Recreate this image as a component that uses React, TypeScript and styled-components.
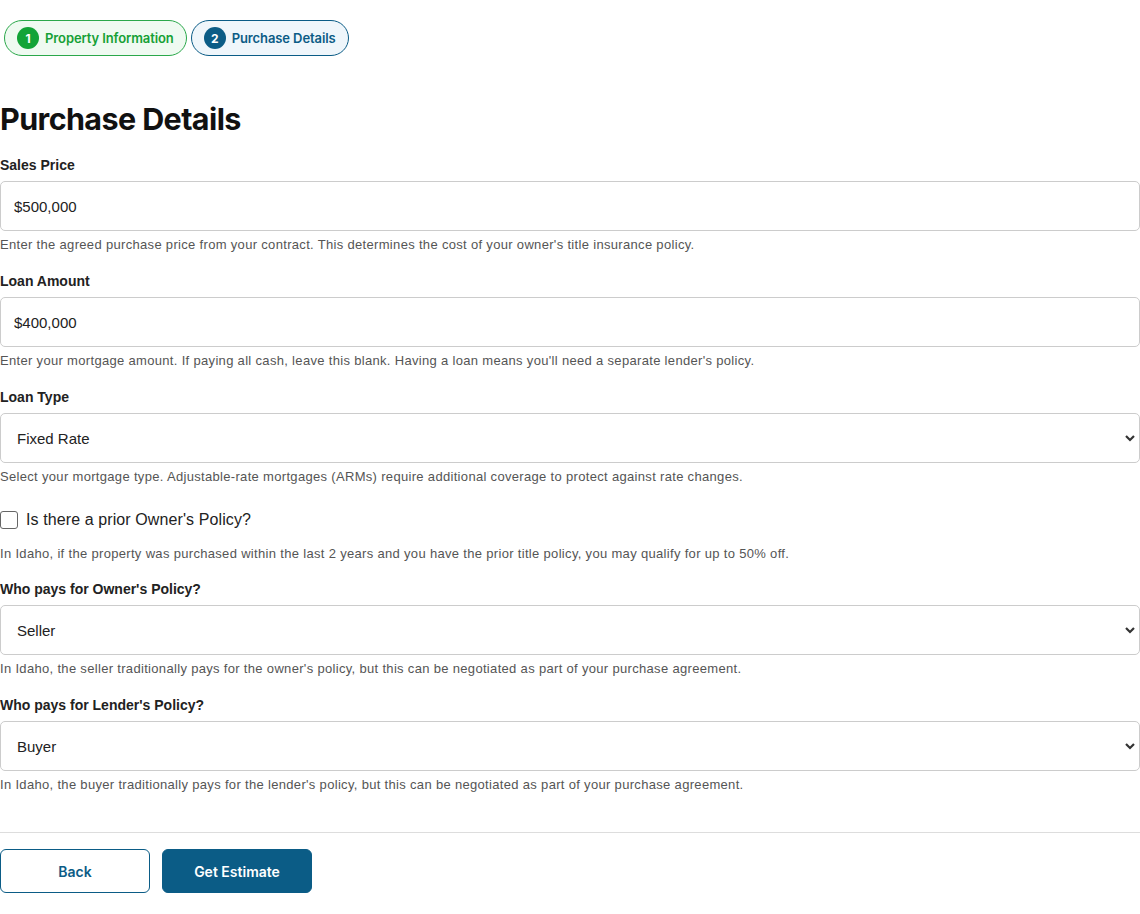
import React from "react";
import styled, { createGlobalStyle } from "styled-components";

const Global = createGlobalStyle`
  html, body { margin: 0; padding: 0; background: #fff; }
  body { font-family: "Liberation Sans", Arial, sans-serif; color: #222; }
  * { box-sizing: border-box; }
`;

const Page = styled.div`
  padding: 20px 0 20px 0;
  width: 1140px;
`;

const Stepper = styled.div`
  display: flex;
  gap: 4px;
  padding-left: 4px;
`;

const Step = styled.div<{ $variant: "done" | "active" }>`
  display: flex;
  align-items: center;
  gap: 6px;
  height: 36px;
  padding: 0 12px 0 12px;
  border-radius: 18px;
  border: 1px solid ${(p) => (p.$variant === "done" ? "#2aa84a" : "#0b5c86")};
  background: ${(p) => (p.$variant === "done" ? "#effaf1" : "#eff6fb")};
  color: ${(p) => (p.$variant === "done" ? "#16a035" : "#0b5c86")};
  font-family: Inter, sans-serif;
  font-weight: 600;
  font-size: 13px;
  letter-spacing: -0.1px;
`;

const StepNum = styled.span<{ $variant: "done" | "active" }>`
  width: 22px;
  height: 22px;
  border-radius: 50%;
  display: flex;
  align-items: center;
  justify-content: center;
  background: ${(p) => (p.$variant === "done" ? "#13a337" : "#0b5c86")};
  color: #fff;
  font-size: 12px;
  font-weight: 700;
`;

const Title = styled.h1`
  margin: 44px 0 19px 0;
  font-family: Inter, sans-serif;
  font-weight: 700;
  font-size: 30.5px;
  letter-spacing: -0.6px;
  line-height: 38px;
  color: #111;
`;

const Field = styled.div`
  margin-bottom: 21px;
`;

const Label = styled.label`
  display: block;
  font-size: 14px;
  font-weight: 700;
  color: #222;
  line-height: 17px;
  margin-bottom: 7px;
`;

const Input = styled.input`
  display: block;
  width: 100%;
  height: 50px;
  border: 1px solid #ccc;
  border-radius: 5px;
  padding: 0 13px;
  font-family: "Liberation Sans", Arial, sans-serif;
  font-size: 15px;
  color: #222;
  background: #fff;
  outline: none;
`;

const SelectWrap = styled.div`
  position: relative;
`;

const Select = styled.select`
  display: block;
  width: 100%;
  height: 50px;
  border: 1px solid #ccc;
  border-radius: 5px;
  padding: 0 16px;
  font-family: "Liberation Sans", Arial, sans-serif;
  font-size: 15px;
  color: #222;
  background: #fff;
  appearance: none;
  outline: none;
`;

const Chevron = styled.svg`
  position: absolute;
  right: 4px;
  top: 50%;
  transform: translateY(-50%);
  pointer-events: none;
`;

const Help = styled.div`
  margin-top: 6px;
  font-size: 13px;
  line-height: 15px;
  color: #555;
  letter-spacing: 0.32px;
`;

const CheckRow = styled.label`
  display: flex;
  align-items: center;
  gap: 8px;
  font-size: 16px;
  color: #222;
  margin-top: 27px;
  letter-spacing: 0.1px;
`;

const Box = styled.span`
  width: 18px;
  height: 18px;
  border: 1px solid #666;
  border-radius: 3px;
  background: #fff;
`;

const CheckHelp = styled(Help)`
  margin-top: 17px;
  margin-bottom: 20px;
`;

const Divider = styled.hr`
  border: none;
  border-top: 1px solid #ddd;
  margin: 40px 0 16px 0;
`;

const Actions = styled.div`
  display: flex;
  gap: 12px;
`;

const Btn = styled.button<{ $primary?: boolean }>`
  width: 150px;
  height: 44px;
  border-radius: 6px;
  border: 1px solid #0b5c86;
  background: ${(p) => (p.$primary ? "#0b5c86" : "#fff")};
  color: ${(p) => (p.$primary ? "#fff" : "#0b5c86")};
  font-family: Inter, sans-serif;
  font-weight: 600;
  font-size: 14px;
`;

const SelField = ({ label, value, help }: { label: string; value: string; help: string }) => (
  <Field>
    <Label>{label}</Label>
    <SelectWrap>
      <Select defaultValue={value}>
        <option>{value}</option>
      </Select>
      <Chevron width="12" height="12" viewBox="0 0 12 12">
        <path d="M2 4 L6 8 L10 4" fill="none" stroke="#333" strokeWidth="2.2" />
      </Chevron>
    </SelectWrap>
    <Help>{help}</Help>
  </Field>
);

export default function App() {
  return (
    <Page>
      <Global />
      <Stepper>
        <Step $variant="done">
          <StepNum $variant="done">1</StepNum>
          Property Information
        </Step>
        <Step $variant="active">
          <StepNum $variant="active">2</StepNum>
          Purchase Details
        </Step>
      </Stepper>
      <Title>Purchase Details</Title>
      <Field>
        <Label>Sales Price</Label>
        <Input defaultValue="$500,000" />
        <Help>Enter the agreed purchase price from your contract. This determines the cost of your owner's title insurance policy.</Help>
      </Field>
      <Field>
        <Label>Loan Amount</Label>
        <Input defaultValue="$400,000" />
        <Help>Enter your mortgage amount. If paying all cash, leave this blank. Having a loan means you'll need a separate lender's policy.</Help>
      </Field>
      <SelField
        label="Loan Type"
        value="Fixed Rate"
        help="Select your mortgage type. Adjustable-rate mortgages (ARMs) require additional coverage to protect against rate changes."
      />
      <CheckRow>
        <Box />
        Is there a prior Owner's Policy?
      </CheckRow>
      <CheckHelp>In Idaho, if the property was purchased within the last 2 years and you have the prior title policy, you may qualify for up to 50% off.</CheckHelp>
      <SelField
        label="Who pays for Owner's Policy?"
        value="Seller"
        help="In Idaho, the seller traditionally pays for the owner's policy, but this can be negotiated as part of your purchase agreement."
      />
      <SelField
        label="Who pays for Lender's Policy?"
        value="Buyer"
        help="In Idaho, the buyer traditionally pays for the lender's policy, but this can be negotiated as part of your purchase agreement."
      />
      <Divider />
      <Actions>
        <Btn>Back</Btn>
        <Btn $primary>Get Estimate</Btn>
      </Actions>
    </Page>
  );
}
